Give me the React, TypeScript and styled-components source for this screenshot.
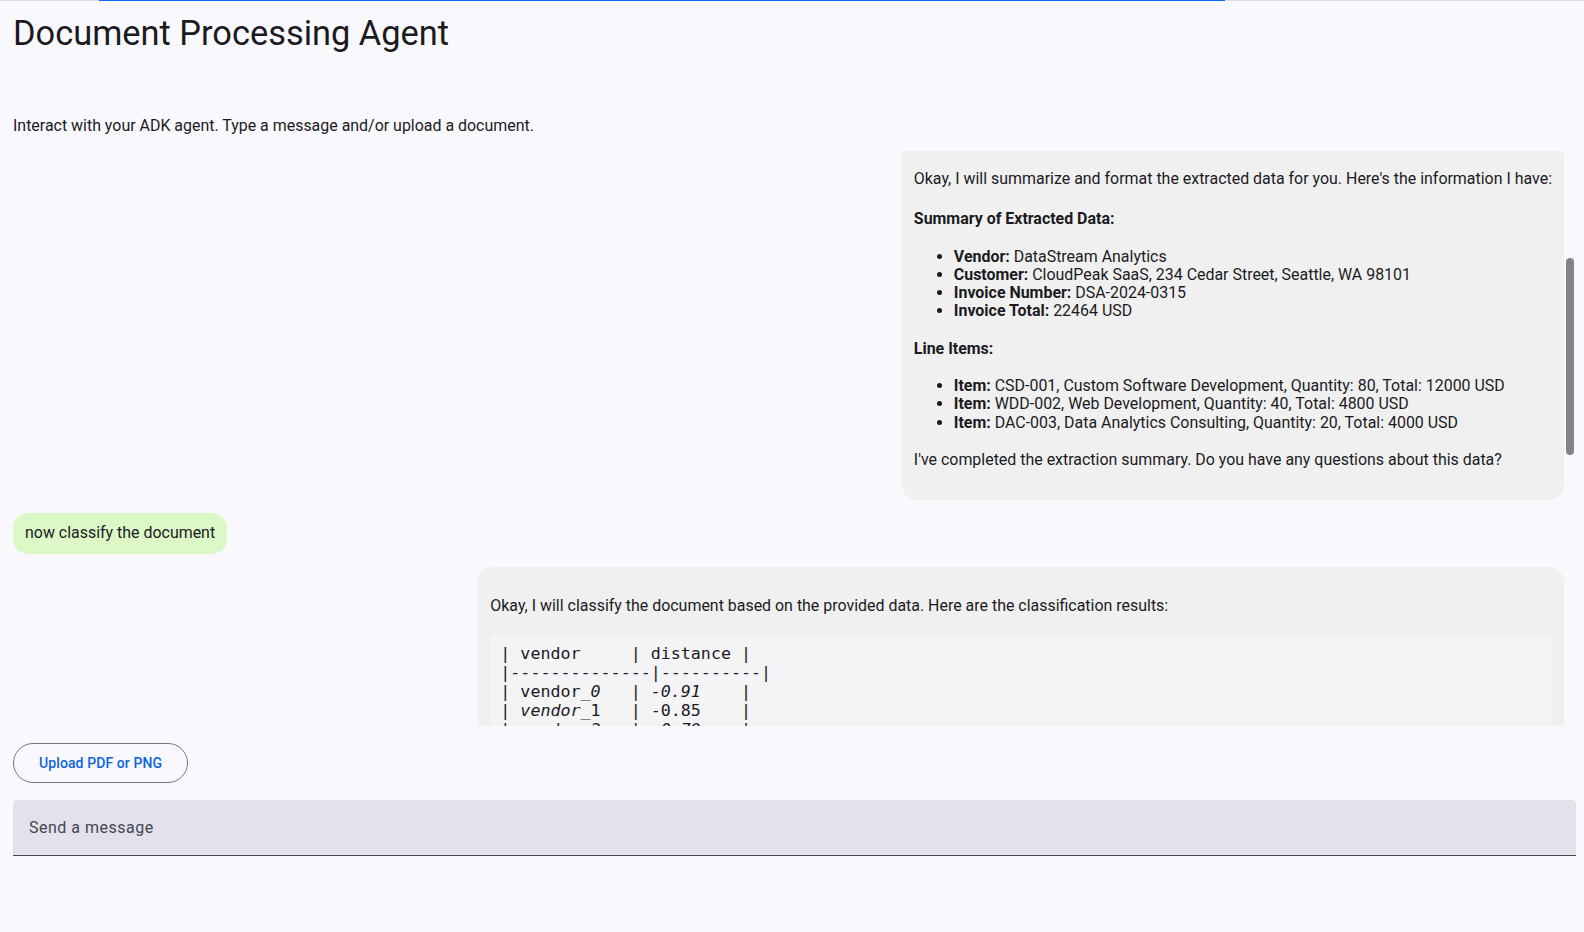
import React, { useLayoutEffect, useRef, useState } from "react";
import styled, { createGlobalStyle } from "styled-components";

const GlobalStyle = createGlobalStyle`
  html, body {
    margin: 0;
    padding: 0;
    background: #f9f8fd;
  }
  body {
    font-family: Roboto, "Noto Sans", Arial, sans-serif;
    color: #1b1b1f;
  }
  * {
    box-sizing: border-box;
  }
`;

type Vendor = { name: string; distance: string };

const vendors: Vendor[] = Array.from({ length: 36 }, (_, i) => {
  const d = i < 3 ? -0.91 + 0.06 * i : -0.79 + 0.02 * (i - 2);
  return { name: `vendor_${i}`, distance: d.toFixed(2) };
});

const rowText = (v: Vendor) => `| ${v.name.padEnd(11)}| ${v.distance.padEnd(9)}|`;

const Shell = styled.div`
  height: 100vh;
  display: flex;
  flex-direction: column;
  overflow: hidden;
`;

const ProgressTrack = styled.div`
  flex-shrink: 0;
  height: 1px;
  background: #e1e0ea;
  display: flex;
`;

const ProgressIndicator = styled.div<{ $start: number; $size: number }>`
  margin-left: ${(p) => p.$start}%;
  width: ${(p) => p.$size}%;
  background: #0b67f5;
`;

const Page = styled.div`
  flex: 1;
  min-height: 0;
  display: flex;
  flex-direction: column;
  padding: 0 8px 76px 13px;
`;

const Title = styled.h1`
  margin: 12px 0 0;
  font-size: 34.4px;
  font-weight: 400;
  line-height: 40px;
  color: #1b1b1f;
`;

const Subtitle = styled.div`
  margin-top: 64px;
  font-size: 15.94px;
  line-height: 18.3px;
`;

const ChatFrame = styled.div`
  position: relative;
  margin-top: 15.7px;
  flex: 1;
  min-height: 0;
`;

const ChatArea = styled.div`
  height: 100%;
  overflow-y: auto;
  padding-right: 12px;
  display: flex;
  flex-direction: column;
  gap: 12.5px;
  scrollbar-width: none;

  &::-webkit-scrollbar {
    display: none;
  }
`;

const ScrollThumb = styled.div`
  position: absolute;
  right: 2px;
  width: 8px;
  border-radius: 4px;
  background: #80838b;
`;

const Bubble = styled.div<{ $from: "user" | "agent" }>`
  flex-shrink: 0;
  align-self: ${(p) => (p.$from === "user" ? "flex-start" : "flex-end")};
  max-width: 70%;
  padding: ${(p) => (p.$from === "user" ? "11.5px 12px" : "11px 12px 12px")};
  border-radius: 15px;
  background: ${(p) => (p.$from === "user" ? "#dcf8c6" : "#f0f0f0")};
  font-size: 15.94px;
  line-height: 18.3px;

  p {
    margin: 19px 0;
  }
  ul {
    margin: 19px 0;
    padding-left: 40px;
  }
  strong {
    font-weight: 700;
  }
`;

const Lead = styled.p`
  && {
    margin-bottom: 21.7px;
  }
`;

const CodeBlock = styled.pre`
  margin: 19px 0;
  padding: 10px;
  background: #f4f3f6;
  border-radius: 6px;
  font-family: "DejaVu Sans Mono", "Liberation Mono", monospace;
  font-size: 16.67px;
  line-height: 19px;
  white-space: pre;
  overflow-x: auto;
`;

const UploadButton = styled.button`
  align-self: flex-start;
  flex-shrink: 0;
  margin-top: 17px;
  height: 40px;
  padding: 0 25px;
  border: 1px solid #767680;
  border-radius: 20px;
  background: transparent;
  color: #0b63e5;
  font-family: Roboto, sans-serif;
  font-size: 14px;
  font-weight: 500;
  letter-spacing: 0.1px;
  cursor: pointer;
`;

const MessageField = styled.div`
  flex-shrink: 0;
  margin-top: 17px;
  height: 56px;
  display: flex;
  align-items: center;
  padding: 0 16px;
  background: #e2e1ec;
  border-radius: 4px 4px 0 0;
  border-bottom: 1px solid #46464f;
`;

const MessageInput = styled.input`
  flex: 1;
  padding: 0;
  border: none;
  outline: none;
  background: transparent;
  font-family: Roboto, sans-serif;
  font-size: 16px;
  letter-spacing: 0.5px;
  color: #1b1b1f;
  &::placeholder {
    color: #46464f;
  }
`;

const VendorTable = () => {
  const pairs: React.ReactNode[] = [];
  for (let i = 0; i < vendors.length; i += 2) {
    const a = vendors[i];
    const b = vendors[i + 1];
    pairs.push(
      <React.Fragment key={a.name}>
        {"| vendor_"}
        <em>{`${rowText(a).slice(9)}\n| vendor`}</em>
        {rowText(b).slice(8) + (i + 2 < vendors.length ? "\n" : "")}
      </React.Fragment>
    );
  }
  return (
    <CodeBlock>
      {"| vendor     | distance |\n|--------------|----------|\n"}
      {pairs}
    </CodeBlock>
  );
};

const App = () => {
  const chatRef = useRef<HTMLDivElement>(null);
  const anchorRef = useRef<HTMLDivElement>(null);
  const [thumb, setThumb] = useState({ top: 0, height: 0 });

  const updateThumb = () => {
    const chat = chatRef.current;
    if (!chat) return;
    const { scrollTop, scrollHeight, clientHeight } = chat;
    const height = (clientHeight * clientHeight) / scrollHeight;
    const top = (scrollTop / scrollHeight) * clientHeight;
    setThumb({ top: top + 2, height: height - 4 });
  };

  useLayoutEffect(() => {
    const chat = chatRef.current;
    const anchor = anchorRef.current;
    if (!chat || !anchor) return;
    const offset =
      anchor.getBoundingClientRect().top - chat.getBoundingClientRect().top;
    chat.scrollTop = chat.scrollTop + offset + 11;
    updateThumb();
  }, []);

  return (
    <>
      <GlobalStyle />
      <Shell>
        <ProgressTrack>
          <ProgressIndicator $start={6.25} $size={71.09} />
        </ProgressTrack>
        <Page>
          <Title>Document Processing Agent</Title>
          <Subtitle>
            Interact with your ADK agent. Type a message and/or upload a document.
          </Subtitle>
          <ChatFrame>
            <ChatArea ref={chatRef} onScroll={updateThumb}>
              <Bubble $from="user">extract the data from this invoice</Bubble>
              <Bubble $from="agent">
                <p>I have processed the uploaded document invoice_datastream.pdf.</p>
                <ul>
                  <li>
                    <strong>Document type:</strong> Invoice
                  </li>
                  <li>
                    <strong>Status:</strong> Extraction complete
                  </li>
                </ul>
                <p>Would you like me to summarize the extracted data?</p>
              </Bubble>
              <Bubble $from="user">yes, summarize and format the data</Bubble>
              <Bubble $from="agent" ref={anchorRef}>
                <Lead>
                  Okay, I will summarize and format the extracted data for you. Here's the
                  information I have:
                </Lead>
                <p>
                  <strong>Summary of Extracted Data:</strong>
                </p>
                <ul>
                  <li>
                    <strong>Vendor:</strong> DataStream Analytics
                  </li>
                  <li>
                    <strong>Customer:</strong> CloudPeak SaaS, 234 Cedar Street, Seattle, WA
                    98101
                  </li>
                  <li>
                    <strong>Invoice Number:</strong> DSA-2024-0315
                  </li>
                  <li>
                    <strong>Invoice Total:</strong> 22464 USD
                  </li>
                </ul>
                <p>
                  <strong>Line Items:</strong>
                </p>
                <ul>
                  <li>
                    <strong>Item:</strong> CSD-001, Custom Software Development, Quantity:
                    80, Total: 12000 USD
                  </li>
                  <li>
                    <strong>Item:</strong> WDD-002, Web Development, Quantity: 40, Total:
                    4800 USD
                  </li>
                  <li>
                    <strong>Item:</strong> DAC-003, Data Analytics Consulting, Quantity: 20,
                    Total: 4000 USD
                  </li>
                </ul>
                <p>
                  I've completed the extraction summary. Do you have any questions about
                  this data?
                </p>
              </Bubble>
              <Bubble $from="user">now classify the document</Bubble>
              <Bubble $from="agent">
                <p>
                  Okay, I will classify the document based on the provided data. Here are
                  the classification results:
                </p>
                <VendorTable />
                <p>
                  The lower the distance, the closer the document matches a known vendor
                  profile. Based on these results, the document is most closely associated
                  with vendor_0, which corresponds to DataStream Analytics.
                </p>
                <p>Let me know if you would like me to take any further action.</p>
              </Bubble>
            </ChatArea>
            <ScrollThumb style={{ top: thumb.top, height: thumb.height }} />
          </ChatFrame>
          <UploadButton>Upload PDF or PNG</UploadButton>
          <MessageField>
            <MessageInput placeholder="Send a message" />
          </MessageField>
        </Page>
      </Shell>
    </>
  );
};

export default App;
